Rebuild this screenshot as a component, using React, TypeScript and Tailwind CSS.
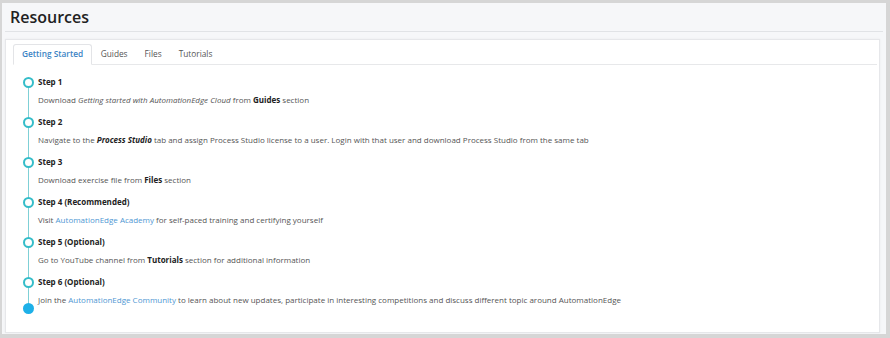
import React from 'react'

type Step = {
    title: string
    body: React.ReactNode
}

const link = 'text-[#4f97d3]'
const strong = 'font-bold text-[#222]'

const steps: Step[] = [
    {
        title: 'Step 1',
        body: (
            <>
                Download <span className="italic">Getting started with AutomationEdge Cloud</span> from <span className={strong}>Guides</span> section
            </>
        )
    },
    {
        title: 'Step 2',
        body: (
            <>
                Navigate to the <span className={strong + ' italic'}>Process Studio</span> tab and assign Process Studio license to a user. Login with that user and download Process Studio from the same tab
            </>
        )
    },
    {
        title: 'Step 3',
        body: (
            <>
                Download exercise file from <span className={strong}>Files</span> section
            </>
        )
    },
    {
        title: 'Step 4 (Recommended)',
        body: (
            <>
                Visit <span className={link}>AutomationEdge Academy</span> for self-paced training and certifying yourself
            </>
        )
    },
    {
        title: 'Step 5 (Optional)',
        body: (
            <>
                Go to YouTube channel from <span className={strong}>Tutorials</span> section for additional information
            </>
        )
    },
    {
        title: 'Step 6 (Optional)',
        body: (
            <>
                Join the <span className={link}>AutomationEdge Community</span> to learn about new updates, participate in interesting competitions and discuss different topic around AutomationEdge
            </>
        )
    }
]

const tabs = ['Getting Started', 'Guides', 'Files', 'Tutorials']

export default function App() {
    return (
        <div
            className="w-[890px] h-[338px] overflow-hidden bg-[#f6f7f9] border-t-[3px] border-l-[2px] border-r-[4px] border-b-[4px] border-[#d6d6d6] flex flex-col"
            style={{ fontFamily: '"Open Sans", "Noto Sans", sans-serif' }}
        >
            <header className="h-[28px] pl-[8px] flex items-center">
                <h1 className="text-[16px] font-semibold text-[#222] leading-none">Resources</h1>
            </header>
            <div className="mx-[3px] h-px bg-[#e1e3e6]" />

            <div className="mt-[7px] ml-[3px] w-[875px] h-[294px] bg-white border border-[#e6e7ea] shadow-[0_0_2px_rgba(0,0,0,0.06)] pt-[4px] pl-[7px] pr-[2px]">
                <nav className="flex border-b border-[#e7e8ea] h-[21px]">
                    {tabs.map((t, i) => (
                        <div
                            key={t}
                            className={
                                i === 0
                                    ? 'px-[8px] flex items-center text-[8.3px] font-semibold text-[#3b83c4] bg-white border border-[#e3e4e7] border-b-white rounded-t-[3px] -mb-px'
                                    : 'px-[8.5px] flex items-center text-[8.3px] text-[#555]'
                            }
                        >
                            {t}
                        </div>
                    ))}
                </nav>

                <div className="relative mt-[11px] pl-[10px]">
                    <div className="absolute left-[15px] top-[6px] h-[228px] w-px bg-[#7fd0d6]" />
                    {steps.map(s => (
                        <div key={s.title} className="relative flex gap-[4px] mb-[10px]">
                            <div className="w-[11px] h-[12px] flex items-center justify-center shrink-0">
                                <div className="w-[11px] h-[11px] rounded-full border-[2px] border-[#35bdc9] bg-white" />
                            </div>
                            <div className="text-[8px] leading-[12px]">
                                <div className="font-bold text-[#222]">{s.title}</div>
                                <div className="mt-[6px] text-[#555]">{s.body}</div>
                            </div>
                        </div>
                    ))}
                    <div className="relative -mt-[13px] w-[11px] h-[11px] rounded-full bg-[#1eb0e8]" />
                </div>
            </div>
        </div>
    )
}
